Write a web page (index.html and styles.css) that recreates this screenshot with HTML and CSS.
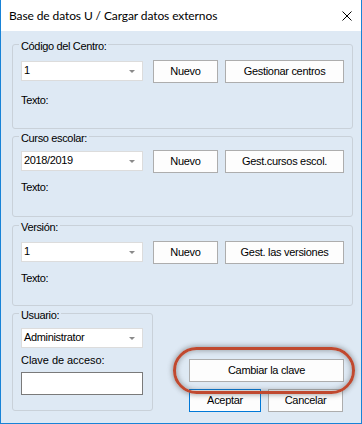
FILE: index.html
```html
<!DOCTYPE html>
<html lang="es">
<head>
    <meta charset="UTF-8">
    <meta name="viewport" content="width=device-width, initial-scale=1.0">
    <title>Base de datos U / Cargar datos externos</title>
    <link rel="stylesheet" href="styles.css">
</head>
<body>
    <div class="window">
        <div class="titlebar">
            <span class="title">Base de datos U / Cargar datos externos</span>
            <svg class="close" width="10" height="10" viewBox="0 0 10 10">
                <path d="M0.5 0.5 L9.5 9.5 M9.5 0.5 L0.5 9.5" stroke="#000" stroke-width="1" fill="none"/>
            </svg>
        </div>

        <div class="client">
            <fieldset class="group centre">
                <legend>Código del Centro:</legend>
                <div class="row">
                    <div class="combo"><span>1</span><i class="arrow"></i></div>
                    <button class="btn new">Nuevo</button>
                    <button class="btn manage">Gestionar centros</button>
                </div>
                <div class="caption">Texto:</div>
            </fieldset>

            <fieldset class="group course">
                <legend>Curso escolar:</legend>
                <div class="row">
                    <div class="combo"><span>2018/2019</span><i class="arrow"></i></div>
                    <button class="btn new">Nuevo</button>
                    <button class="btn manage">Gest.cursos escol.</button>
                </div>
                <div class="caption">Texto:</div>
            </fieldset>

            <fieldset class="group version">
                <legend>Versión:</legend>
                <div class="row">
                    <div class="combo"><span>1</span><i class="arrow"></i></div>
                    <button class="btn new">Nuevo</button>
                    <button class="btn manage">Gest. las versiones</button>
                </div>
                <div class="caption">Texto:</div>
            </fieldset>

            <div class="bottom">
                <fieldset class="group user">
                    <legend>Usuario:</legend>
                    <div class="combo"><span>Administrator</span><i class="arrow"></i></div>
                    <div class="caption key">Clave de acceso:</div>
                    <input type="password" class="password">
                </fieldset>

                <div class="actions">
                    <div class="highlight">
                        <button class="btn change">Cambiar la clave</button>
                        <span class="ring"></span>
                    </div>
                    <div class="pair">
                        <button class="btn ok">Aceptar</button>
                        <button class="btn cancel">Cancelar</button>
                    </div>
                </div>
            </div>
        </div>
    </div>
</body>
</html>
```

FILE: styles.css
```css
html, body {
    margin: 0;
    padding: 0;
}

body {
    font-family: 'Liberation Sans', Arial, sans-serif;
    font-size: 11px;
    letter-spacing: -0.35px;
    color: #000;
    background: #dee9f4;
}

.window {
    width: 362px;
    height: 424px;
    box-sizing: border-box;
    border: 1px solid #1883d7;
    border-top: none;
    background: #dee9f4;
    display: flex;
    flex-direction: column;
}

.titlebar {
    height: 31px;
    flex-shrink: 0;
    background: #fff;
    display: flex;
    align-items: center;
    justify-content: space-between;
    padding: 0 9px 0 8px;
}

.title {
    font-family: Lato, 'Open Sans', sans-serif;
    font-size: 12px;
    letter-spacing: -0.1px;
}

.close {
    display: block;
}

.client {
    padding: 5px 8px 0 11px;
}

.group {
    margin: 0;
    padding: 7px 8px 21px 8px;
    border: 1px solid #c9d1d9;
    border-radius: 3px;
}

.group legend {
    padding: 4px 2px 0;
    margin-left: -2px;
    line-height: 13px;
}

.course {
    margin-top: -1px;
    padding-top: 5px;
    padding-bottom: 22px;
}

.version {
    padding-bottom: 20px;
}

.row {
    display: flex;
    align-items: flex-start;
}

.combo {
    width: 122px;
    height: 20px;
    box-sizing: border-box;
    margin-top: 1px;
    border: 1px solid #dcdcdc;
    background: #fff;
    display: flex;
    align-items: center;
    justify-content: space-between;
    padding: 0 7px 2px 2px;
    line-height: 16px;
}

.arrow {
    width: 0;
    height: 0;
    border-left: 3px solid transparent;
    border-right: 3px solid transparent;
    border-top: 3px solid #8a8a8a;
    margin-top: 2px;
}

.btn {
    font-family: inherit;
    font-size: 11px;
    letter-spacing: -0.3px;
    color: #000;
    height: 23px;
    box-sizing: border-box;
    background: #fdfdfd;
    border: 1px solid #adadad;
    padding: 0;
    line-height: 21px;
}

.new {
    width: 65px;
    margin-left: 10px;
}

.manage {
    width: 119px;
    margin-left: 7px;
}

.caption {
    line-height: 13px;
    margin-top: 11px;
}

.course .caption,
.version .caption {
    margin-top: 8px;
}

.bottom {
    display: flex;
    align-items: flex-start;
}

.user {
    width: 141px;
    box-sizing: border-box;
    margin-top: -1px;
    padding: 5px 8px 15px 8px;
}

.user .caption {
    margin-top: 6px;
    letter-spacing: -0.05px;
}

.password {
    display: block;
    width: 122px;
    height: 23px;
    box-sizing: border-box;
    margin: 5px 0 0;
    border: 1px solid #7a7a7a;
    background: #fff;
}

.actions {
    margin-left: 36px;
    display: flex;
    flex-direction: column;
}

.highlight {
    position: relative;
    margin-top: 53px;
}

.change {
    width: 155px;
    display: block;
}

.ring {
    position: absolute;
    left: -16px;
    top: -12px;
    width: 182px;
    height: 47px;
    box-sizing: border-box;
    border: 3px solid #c0492f;
    border-radius: 24px;
    box-shadow: 0 0 5px 1px rgba(70, 70, 70, 0.45), inset 0 0 5px 1px rgba(70, 70, 70, 0.4);
    pointer-events: none;
}

.pair {
    display: flex;
    gap: 7px;
    margin-top: 7px;
}

.ok {
    width: 72px;
    border-color: #0078d7;
}

.cancel {
    width: 75px;
}
```
